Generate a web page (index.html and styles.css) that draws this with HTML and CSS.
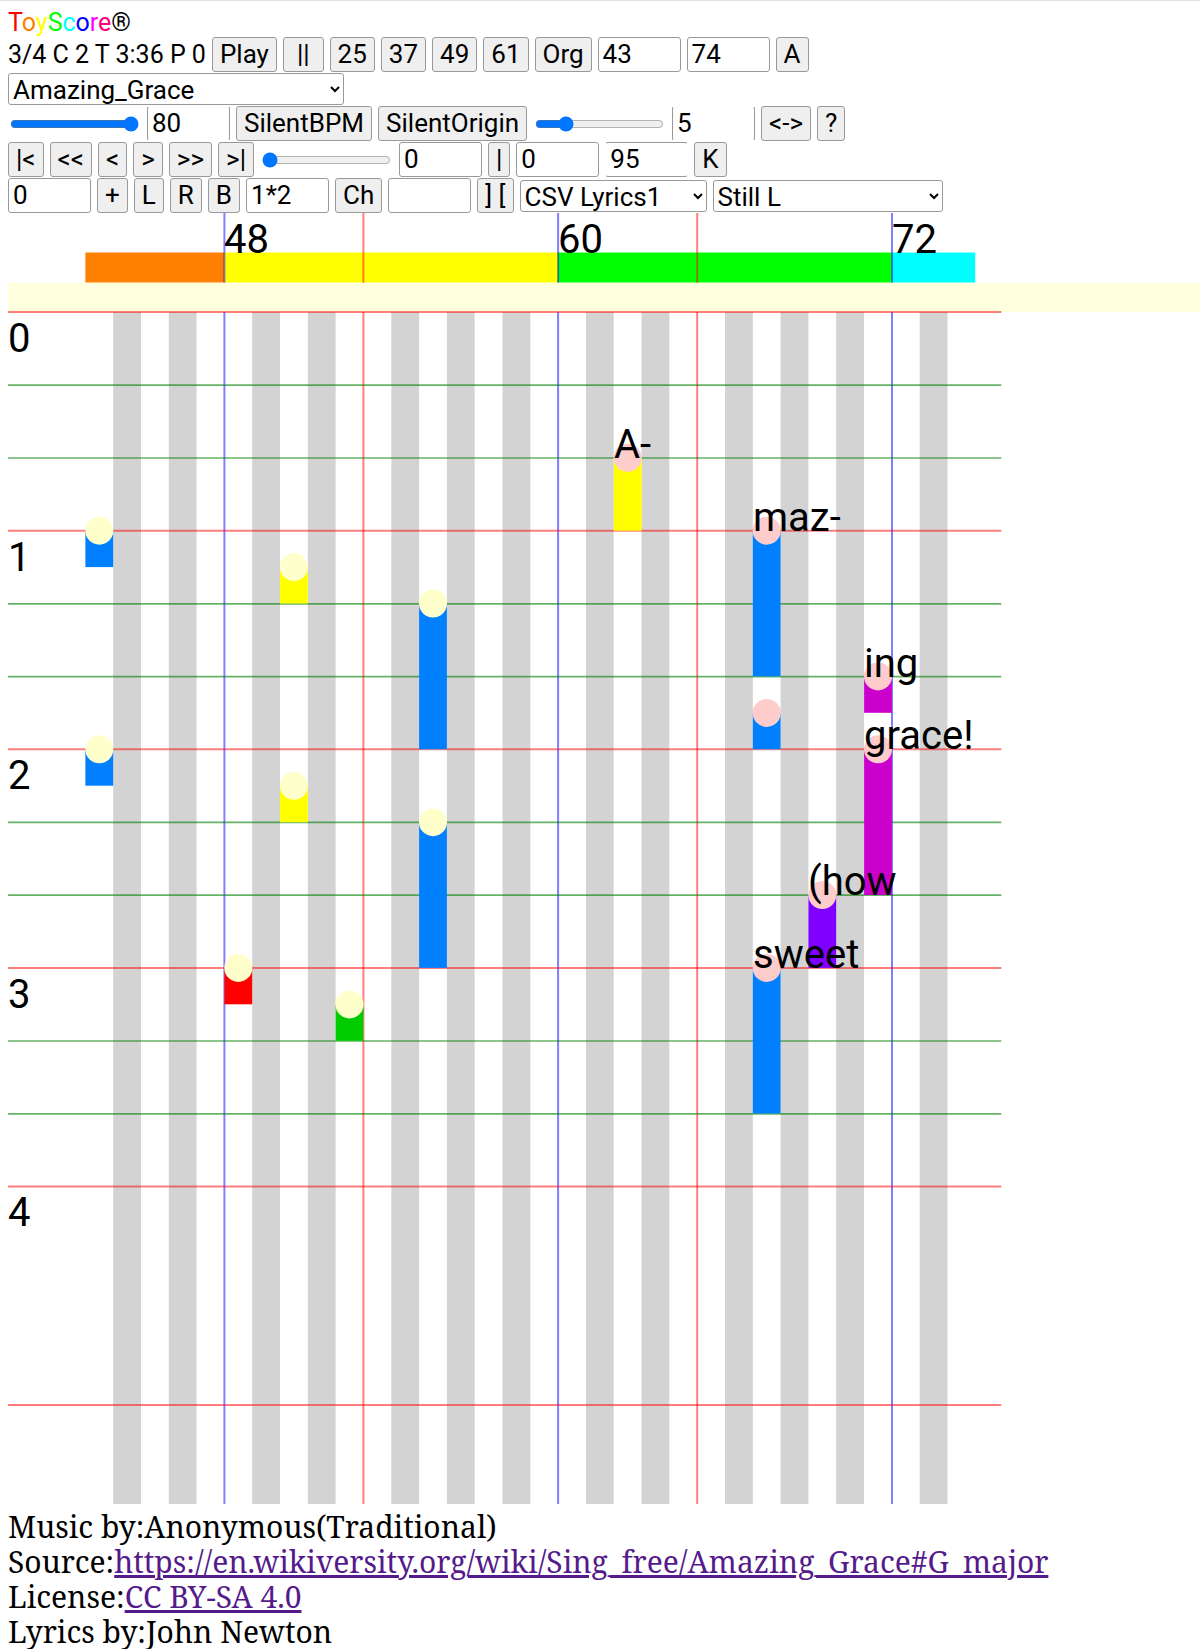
FILE: index.html
```html
<!DOCTYPE html>
<html lang="en">
<head>
<meta charset="utf-8">
<title>ToyScore</title>
<link rel="stylesheet" href="styles.css">
</head>
<body>
<header class="brand"><span class="c-red">T</span><span class="c-orange">o</span><span class="c-yellow">y</span><span class="c-green">S</span><span class="c-cyan">c</span><span class="c-blue">o</span><span class="c-magenta">r</span><span class="c-pink">e</span>®</header>

<form class="toolbar">
  <div class="row">
    <span class="status">3/4 C 2 T 3:36 P 0</span>
    <button type="button">Play</button>
    <button type="button" class="wide">||</button>
    <button type="button">25</button>
    <button type="button">37</button>
    <button type="button">49</button>
    <button type="button">61</button>
    <button type="button">Org</button>
    <input class="field" type="text" aria-label="Lowest key" value="43">
    <input class="field" type="text" aria-label="Highest key" value="74">
    <button type="button">A</button>
  </div>
  <div class="row">
    <select class="song" aria-label="Song"><option>Amazing_Grace</option></select>
  </div>
  <div class="row">
    <input type="range" aria-label="Tempo" min="0" max="100" value="100">
    <input class="field open-y" type="text" aria-label="Beats per minute" value="80">
    <button type="button">SilentBPM</button>
    <button type="button">SilentOrigin</button>
    <input type="range" aria-label="Zoom" min="0" max="100" value="20">
    <input class="field open-y" type="text" aria-label="Zoom level" value="5">
    <button type="button">&lt;-&gt;</button>
    <button type="button">?</button>
  </div>
  <div class="row">
    <button type="button">|&lt;</button>
    <button type="button">&lt;&lt;</button>
    <button type="button">&lt;</button>
    <button type="button">&gt;</button>
    <button type="button">&gt;&gt;</button>
    <button type="button">&gt;|</button>
    <input type="range" aria-label="Position" min="0" max="100" value="0">
    <input class="field" type="text" aria-label="Current beat" value="0">
    <button type="button">|</button>
    <input class="field" type="text" aria-label="First beat" value="0">
    <input class="field open-x" type="text" aria-label="Last beat" value="95">
    <button type="button">K</button>
  </div>
  <div class="row">
    <input class="field" type="text" aria-label="Transpose" value="0">
    <button type="button">+</button>
    <button type="button">L</button>
    <button type="button">R</button>
    <button type="button">B</button>
    <input class="field" type="text" aria-label="Repeat" value="1*2">
    <button type="button">Ch</button>
    <input class="field" type="text" aria-label="Chord" value="">
    <button type="button">] [</button>
    <select class="lyrics" aria-label="Lyrics"><option>CSV Lyrics1</option></select>
    <select class="view" aria-label="View"><option>Still L</option></select>
  </div>
</form>

<main>
<svg class="score" role="img" aria-label="Piano roll of Amazing Grace">
  <g class="sharps">
    <rect x="105.2" y="99" width="27.8" height="1192"/>
    <rect x="160.8" y="99" width="27.8" height="1192"/>
    <rect x="244.2" y="99" width="27.8" height="1192"/>
    <rect x="299.8" y="99" width="27.8" height="1192"/>
    <rect x="383.3" y="99" width="27.8" height="1192"/>
    <rect x="438.9" y="99" width="27.8" height="1192"/>
    <rect x="494.5" y="99" width="27.8" height="1192"/>
    <rect x="577.9" y="99" width="27.8" height="1192"/>
    <rect x="633.5" y="99" width="27.8" height="1192"/>
    <rect x="717" y="99" width="27.8" height="1192"/>
    <rect x="772.6" y="99" width="27.8" height="1192"/>
    <rect x="828.2" y="99" width="27.8" height="1192"/>
    <rect x="911.7" y="99" width="27.8" height="1192"/>
  </g>
  <g class="octaves">
    <rect x="77.4" y="39.5" width="139" height="30.2" fill="#ff8000"/>
    <rect x="216.4" y="39.5" width="333.6" height="30.2" fill="#ffff00"/>
    <rect x="550" y="39.5" width="333.8" height="30.2" fill="#00ff00"/>
    <rect x="883.8" y="39.5" width="83.4" height="30.2" fill="#00ffff"/>
  </g>
  <g class="line-c">
    <path d="M216.4 0V1291M550.1 0V1291M884 0V1291"/>
  </g>
  <g class="line-f">
    <path d="M355.4 0V1291M689.2 0V1291"/>
  </g>
  <rect class="playhead" x="0" y="69.7" width="100%" height="29.3"/>
  <g class="line-beat">
    <path d="M0 172.2H993.3M0 245H993.3M0 390.8H993.3M0 463.6H993.3M0 609.4H993.3M0 682.2H993.3M0 828H993.3M0 900.8H993.3"/>
  </g>
  <g class="line-bar">
    <path d="M0 99.1H993.3M0 317.7H993.3M0 536.3H993.3M0 754.9H993.3M0 973.5H993.3M0 1192H993.3"/>
  </g>
  <g class="notes">
    <rect x="77.4" y="317.7" width="27.8" height="36.4" fill="#0080ff"/>
    <rect x="77.4" y="536.3" width="27.8" height="36.4" fill="#0080ff"/>
    <rect x="272" y="354.1" width="27.8" height="36.4" fill="#ffff00"/>
    <rect x="272" y="572.8" width="27.8" height="36.4" fill="#ffff00"/>
    <rect x="411.1" y="390.6" width="27.8" height="145.7" fill="#0080ff"/>
    <rect x="411.1" y="609.2" width="27.8" height="145.7" fill="#0080ff"/>
    <rect x="216.4" y="754.9" width="27.8" height="36.4" fill="#ff0000"/>
    <rect x="327.6" y="791.4" width="27.8" height="36.4" fill="#00cc00"/>
    <rect x="605.8" y="244.8" width="27.8" height="72.9" fill="#ffff00"/>
    <rect x="744.8" y="317.7" width="27.8" height="145.7" fill="#0080ff"/>
    <rect x="744.8" y="499.9" width="27.8" height="36.4" fill="#0080ff"/>
    <rect x="744.8" y="754.9" width="27.8" height="145.7" fill="#0080ff"/>
    <rect x="800.4" y="682" width="27.8" height="72.9" fill="#8000ff"/>
    <rect x="856.1" y="463.4" width="27.8" height="36.4" fill="#cc00cc"/>
    <rect x="856.1" y="536.3" width="27.8" height="145.7" fill="#cc00cc"/>
  </g>
  <g class="heads-left">
    <circle cx="91.3" cy="317.7" r="14"/>
    <circle cx="91.3" cy="536.3" r="14"/>
    <circle cx="285.9" cy="354.1" r="14"/>
    <circle cx="285.9" cy="572.8" r="14"/>
    <circle cx="425" cy="390.6" r="14"/>
    <circle cx="425" cy="609.2" r="14"/>
    <circle cx="230.3" cy="754.9" r="14"/>
    <circle cx="341.5" cy="791.4" r="14"/>
  </g>
  <g class="heads-right">
    <circle cx="619.7" cy="244.8" r="14"/>
    <circle cx="758.7" cy="317.7" r="14"/>
    <circle cx="758.7" cy="499.9" r="14"/>
    <circle cx="758.7" cy="754.9" r="14"/>
    <circle cx="814.3" cy="682" r="14"/>
    <circle cx="870" cy="463.4" r="14"/>
    <circle cx="870" cy="536.3" r="14"/>
  </g>
  <g class="labels">
    <text x="216" y="40">48</text>
    <text x="550" y="40">60</text>
    <text x="884" y="40">72</text>
    <text x="0" y="139">0</text>
    <text x="0" y="358">1</text>
    <text x="0" y="576">2</text>
    <text x="0" y="795">3</text>
    <text x="0" y="1013">4</text>
    <text x="606" y="245">A-</text>
    <text x="745" y="318">maz-</text>
    <text x="856" y="464">ing</text>
    <text x="856" y="536">grace!</text>
    <text x="800" y="682">(how</text>
    <text x="745" y="755">sweet</text>
  </g>
</svg>
</main>

<footer class="credits">
  <div>Music by:Anonymous(Traditional)</div>
  <div>Source:<a href="https://en.wikiversity.org/wiki/Sing_free/Amazing_Grace#G_major">https://en.wikiversity.org/wiki/Sing_free/Amazing_Grace#G_major</a></div>
  <div>License:<a href="https://creativecommons.org/licenses/by-sa/4.0/">CC BY-SA 4.0</a></div>
  <div>Lyrics by:John Newton</div>
</footer>
</body>
</html>
```
FILE: styles.css
```css
* {
  box-sizing: border-box;
}

body {
  margin: 0;
  padding: 7px 0 0 8px;
  border-top: 1px solid #e0e0e0;
  background: #fff;
  color: #000;
  font-family: Roboto, sans-serif;
  font-size: 25px;
}

.brand {
  line-height: 29px;
}

.c-red { color: #ff0000; }
.c-orange { color: #ff8000; }
.c-yellow { color: #ffff00; }
.c-green { color: #00ff00; }
.c-cyan { color: #00ffff; }
.c-blue { color: #0000ff; }
.c-magenta { color: #ff00ff; }
.c-pink { color: #ff0080; }

.toolbar {
  display: flex;
  flex-direction: column;
  gap: 1px;
}

.row {
  display: flex;
  align-items: center;
  gap: 6px;
}

.status {
  white-space: nowrap;
}

button,
.field,
select {
  margin: 0;
  border: 1px solid #999;
  border-radius: 3px;
  color: #000;
  font-family: inherit;
  font-size: 26px;
  line-height: 30px;
}

button {
  height: 35px;
  padding: 0 7px 1px;
  background: #efefef;
  white-space: nowrap;
}

.wide {
  padding: 0 13px 1px;
}

.field {
  width: 83px;
  height: 35px;
  padding: 0 4px 1px;
  background: #fff;
}

.open-y {
  border-top-color: transparent;
  border-bottom-color: transparent;
}

.open-x {
  border-left-color: transparent;
  border-right-color: transparent;
}

select {
  height: 32px;
  background: #fff;
}

.song { width: 336px; }
.lyrics { width: 187px; }
.view { width: 230px; }

.score {
  display: block;
  width: 100%;
  height: 1291px;
}

.sharps { fill: #d3d3d3; }
.playhead { fill: #ffffdd; }

.line-c,
.line-f,
.line-bar,
.line-beat {
  stroke-width: 2;
  stroke-opacity: 0.5;
}

.line-c { stroke: #00f; }
.line-f { stroke: #f00; }
.line-bar { stroke: #f00; }
.line-beat {
  stroke: #008000;
  stroke-width: 1.7;
  stroke-opacity: 0.6;
}

.heads-left { fill: #ffffcc; }
.heads-right { fill: #ffcccc; }

.labels {
  font-size: 40px;
}

.credits {
  padding-top: 5px;
  font-family: "Noto Serif", "Liberation Serif", serif;
  font-size: 30px;
  line-height: 35px;
}

.credits a {
  color: #551a8b;
}
```
